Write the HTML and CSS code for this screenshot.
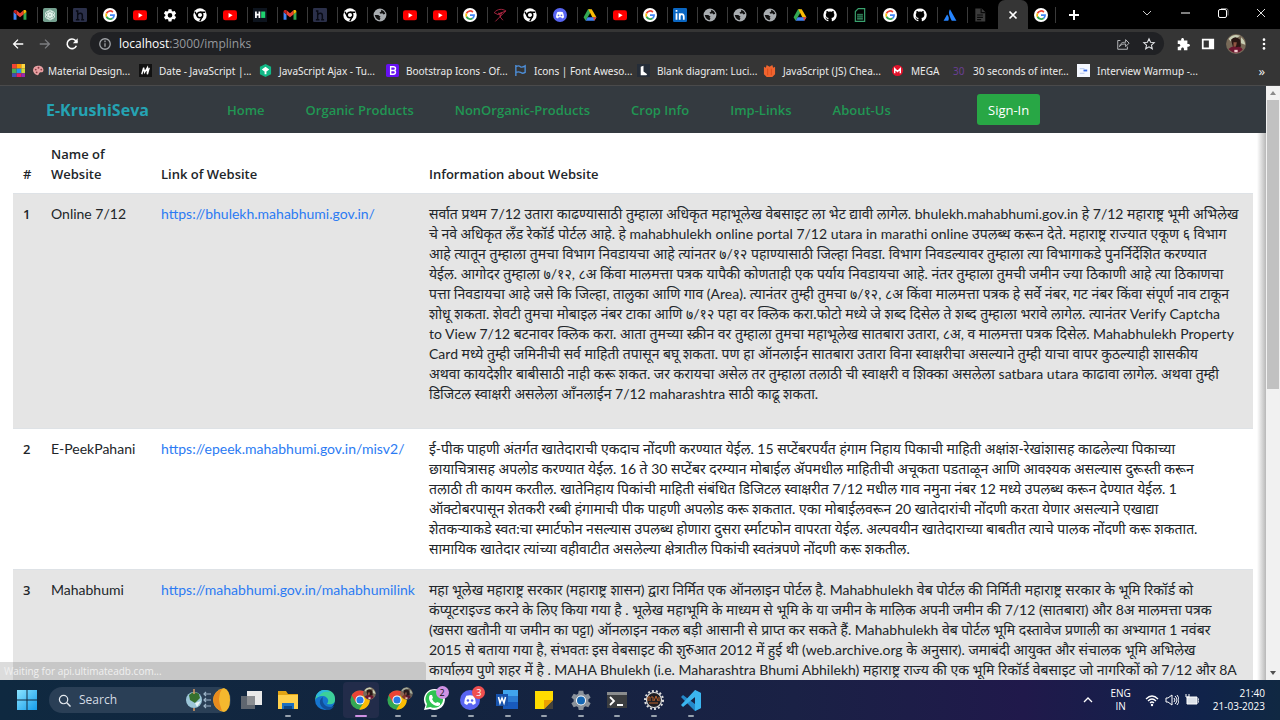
FILE: index.html
```html
<!DOCTYPE html>
<html lang="mr">
<head>
<meta charset="utf-8">
<title>Imp-Links</title>
<link rel="stylesheet" href="styles.css">
</head>
<body>
<svg class="sprite" aria-hidden="true">
  <symbol id="gmail" viewBox="0 0 24 24"><path fill="#4285f4" d="M1 20V7l5 4v9H2z"/><path fill="#34a853" d="M18 20v-9l5-4v13z"/><path fill="#ea4335" d="M6 11V4l6 5 6-5v7l-6 5z"/><path fill="#c5221f" d="M1 7c0-4 3-4 5-3v7z"/><path fill="#fbbc04" d="M23 7c0-4-3-4-5-3v7z"/></symbol>
  <symbol id="gpt" viewBox="0 0 24 24"><rect width="24" height="24" rx="3" fill="#74a08f"/><g fill="none" stroke="#e4f2ec" stroke-width="1.500"><ellipse cx="12" cy="9" rx="4" ry="5.500"/><ellipse cx="12" cy="9" rx="4" ry="5.500" transform="rotate(60 12 12)"/><ellipse cx="12" cy="9" rx="4" ry="5.500" transform="rotate(120 12 12)"/><ellipse cx="12" cy="9" rx="4" ry="5.500" transform="rotate(180 12 12)"/><ellipse cx="12" cy="9" rx="4" ry="5.500" transform="rotate(240 12 12)"/><ellipse cx="12" cy="9" rx="4" ry="5.500" transform="rotate(300 12 12)"/></g></symbol>
  <symbol id="hh" viewBox="0 0 24 24"><rect width="24" height="24" rx="2" fill="#2b304a"/><path fill="none" stroke="#080a14" stroke-width="2.500" d="M8 4v16M8 12c2-4 8-4 8 1v7M5 5h3M5 20h6M14 20h5"/></symbol>
  <symbol id="goog" viewBox="0 0 24 24"><circle cx="12" cy="12" r="12" fill="#fff"/><g fill="none" stroke-width="3"><path stroke="#ea4335" d="M6 9a7 7 0 0 1 11-2"/><path stroke="#fbbc04" d="M6 9a7 7 0 0 0 0 6"/><path stroke="#34a853" d="M6 15a7 7 0 0 0 10.500 2.500"/><path stroke="#4285f4" d="M12 12h7a7 7 0 0 1-2.500 5.500"/></g></symbol>
  <symbol id="yt" viewBox="0 0 24 24"><rect y="4" width="24" height="17" rx="4" fill="#f00"/><path fill="#fff" d="M9.500 8.500v8l7-4z"/></symbol>
  <symbol id="gear" viewBox="0 0 24 24"><path fill="currentColor" fill-rule="evenodd" d="M9.500 2h5l.6 3.200 1.800 1 3.100-1.100 2.500 4.300-2.500 2.100v2l2.500 2.100-2.500 4.300-3.100-1.100-1.800 1-.6 3.200h-5l-.6-3.200-1.800-1L4 19.900l-2.500-4.300L4 13.500v-2L1.500 9.400 4 5.100l3.100 1.100 1.800-1zM12 8.500a4 4 0 1 0 0 8 4 4 0 0 0 0-8z"/></symbol>
  <symbol id="chromebw" viewBox="0 0 24 24"><circle cx="12" cy="12" r="11.500" fill="#fff"/><circle cx="12" cy="12" r="4.800" fill="none" stroke="#000" stroke-width="2.500"/><path fill="none" stroke="#000" stroke-width="2.500" d="M12 7.200h9M16.200 14.500l-4.500 8M7.800 14.500l-4.500-8"/></symbol>
  <symbol id="hr" viewBox="0 0 24 24"><rect width="24" height="24" fill="#0d141e"/><path fill="none" stroke="#fff" stroke-width="3" d="M5 6v11M11 6v11M5 11.500h6"/><path fill="#1ed36f" d="M14 6h7v11h-7z"/></symbol>
  <symbol id="globe" viewBox="0 0 24 24"><circle cx="12" cy="12" r="11" fill="#a9adb1"/><path fill="#111" d="M14 3c4 1 6 4 7 7l-3 1-2-2-3 1-2-2 3-2zM3 12l6 0 4 3-2 2 2 1-2 3C7 20 4 17 3 12z"/></symbol>
  <symbol id="kite" viewBox="0 0 24 24"><path fill="none" stroke="#b32845" stroke-width="1.500" d="M2 8C8 1 16 1 22 5L8 11zM22 5 4 23M8 11l7-3-3 7 5 6M10 8l3 7"/></symbol>
  <symbol id="discord" viewBox="0 0 24 24"><circle cx="12" cy="12" r="12" fill="#5865f2"/><path fill="#fff" d="M7.500 7q4.500-1.500 9 0 2.500 4 2.500 9-1.500 1.500-3.500 2l-1.500-2h-4l-1.500 2q-2-.5-3.500-2 0-5 2.500-9z"/><g fill="#5865f2"><circle cx="9.500" cy="12.500" r="1.500"/><circle cx="14.500" cy="12.500" r="1.500"/></g></symbol>
  <symbol id="drive" viewBox="0 0 24 24"><path fill="#34a853" d="M8.500 2h3.500l2 3.500L4.500 22 1 16z"/><path fill="#fbbc04" d="M9 2h6l8 14h-7z"/><path fill="#4285f4" d="M8 16h15l-3.500 6h-15z"/><path fill="#ea4335" d="M17 16h6l-3.500 6z"/></symbol>
  <symbol id="li" viewBox="0 0 24 24"><rect width="24" height="24" rx="2" fill="#0a66c2"/><path fill="none" stroke="#fff" stroke-width="3" d="M6 9v11M11.500 9v11M11.500 15c0-6 7-6 7 0v5M4.500 5h3"/></symbol>
  <symbol id="github" viewBox="0 0 24 24"><path fill="#fff" d="M12 .8A11.300 11.300 0 0 0 8.400 22.800c.6.1.8-.2.8-.6v-2c-3.100.7-3.800-1.400-3.800-1.400-.5-1.300-1.200-1.700-1.200-1.700-1-.7.1-.7.1-.7 1.100.1 1.700 1.200 1.700 1.200 1 1.700 2.700 1.200 3.300.9.1-.7.4-1.200.7-1.500-2.500-.3-5.200-1.300-5.200-5.600 0-1.200.4-2.200 1.200-3-.1-.3-.5-1.500.1-3.100 0 0 1-.3 3.200 1.200a11 11 0 0 1 5.700 0c2.200-1.500 3.200-1.200 3.200-1.200.6 1.600.2 2.800.1 3.100.8.8 1.200 1.800 1.200 3 0 4.300-2.700 5.300-5.200 5.600.4.400.8 1.100.8 2.100v3.100c0 .4.200.7.800.6A11.300 11.300 0 0 0 12 .8z"/></symbol>
  <symbol id="sheet" viewBox="0 0 24 24"><path fill="none" stroke="#3aa36f" stroke-width="2" d="M9 1h11v22H4V6z"/><path fill="#2d7953" d="M7 10h10v10H7z"/><path stroke="#0b2518" d="M7 13h10M7 16h10"/></symbol>
  <symbol id="atl" viewBox="0 0 24 24"><path fill="#2684ff" d="M12 2c-3 5-2 9 3 20h8zM7 11 1 22h8c2-4 1-8-2-11z"/></symbol>
  <symbol id="file" viewBox="0 0 24 24"><path fill="#3c3c3c" d="M4 1h11l6 6v16H4z"/><path stroke="#090909" stroke-width="2" fill="none" d="M14 1v7h7M7 12h10M7 16h10M7 20h7"/></symbol>
  <symbol id="chrome" viewBox="0 0 24 24"><circle cx="12" cy="12" r="11.500" fill="#34a853"/><path fill="#ea4335" d="M2 6.300a11.500 11.500 0 0 1 20 0L22.500 7H12L7 15z"/><path fill="#fbbc04" d="M22.500 7A11.500 11.500 0 0 1 11 23.500L16.500 15 15 7z"/><circle cx="12" cy="12" r="5.500" fill="#fff"/><circle cx="12" cy="12" r="4.300" fill="#2878e8"/></symbol>
  <symbol id="face" viewBox="0 0 24 24"><circle cx="12" cy="12" r="12" fill="#786a58"/><path fill="#c9cfb5" d="M3 6q5-7 14-4L6 9zM18 4q5 4 5 9l-5-2z"/><path fill="#2a1714" d="M6 7q5-6 11 0l1 8-9 3z"/><path fill="#8f5541" d="M9 10h4l-1 5-3 1z"/><path fill="#6d1730" d="M3 18q5-5 9-2 6-2 8 3-8 8-17-1z"/><path fill="#f2cdd0" d="M10 19h4v3h-4z"/></symbol>
</svg>

<header class="browser">
  <div class="tabs">
    <button class="tab" aria-label="Gmail"><svg><use href="#gmail"/></svg></button>
    <button class="tab" aria-label="ChatGPT"><svg><use href="#gpt"/></svg></button>
    <button class="tab" aria-label="Hashnode"><svg><use href="#hh"/></svg></button>
    <button class="tab" aria-label="Google"><svg><use href="#goog"/></svg></button>
    <button class="tab" aria-label="YouTube"><svg><use href="#yt"/></svg></button>
    <button class="tab" aria-label="Settings"><svg><use href="#gear"/></svg></button>
    <button class="tab" aria-label="Chrome"><svg><use href="#chromebw"/></svg></button>
    <button class="tab" aria-label="YouTube"><svg><use href="#yt"/></svg></button>
    <button class="tab" aria-label="HackerRank"><svg><use href="#hr"/></svg></button>
    <button class="tab" aria-label="Gmail"><svg><use href="#gmail"/></svg></button>
    <button class="tab" aria-label="Hashnode"><svg><use href="#hh"/></svg></button>
    <button class="tab" aria-label="Chrome"><svg><use href="#chromebw"/></svg></button>
    <button class="tab" aria-label="Website"><svg><use href="#globe"/></svg></button>
    <button class="tab" aria-label="YouTube"><svg><use href="#yt"/></svg></button>
    <button class="tab" aria-label="YouTube"><svg><use href="#yt"/></svg></button>
    <button class="tab" aria-label="Google"><svg><use href="#goog"/></svg></button>
    <button class="tab" aria-label="Kite"><svg><use href="#kite"/></svg></button>
    <button class="tab" aria-label="Chrome"><svg><use href="#chromebw"/></svg></button>
    <button class="tab" aria-label="Discord"><svg><use href="#discord"/></svg></button>
    <button class="tab" aria-label="Drive"><svg><use href="#drive"/></svg></button>
    <button class="tab" aria-label="YouTube"><svg><use href="#yt"/></svg></button>
    <button class="tab" aria-label="Google"><svg><use href="#goog"/></svg></button>
    <button class="tab" aria-label="LinkedIn"><svg><use href="#li"/></svg></button>
    <button class="tab" aria-label="Website"><svg><use href="#globe"/></svg></button>
    <button class="tab" aria-label="Website"><svg><use href="#globe"/></svg></button>
    <button class="tab" aria-label="Website"><svg><use href="#globe"/></svg></button>
    <button class="tab" aria-label="Drive"><svg><use href="#drive"/></svg></button>
    <button class="tab" aria-label="GitHub"><svg><use href="#github"/></svg></button>
    <button class="tab" aria-label="Sheets"><svg><use href="#sheet"/></svg></button>
    <button class="tab" aria-label="Google"><svg><use href="#goog"/></svg></button>
    <button class="tab" aria-label="GitHub"><svg><use href="#github"/></svg></button>
    <button class="tab" aria-label="Atlassian"><svg><use href="#atl"/></svg></button>
    <button class="tab" aria-label="Document"><svg><use href="#file"/></svg></button>
    <button class="tab active" aria-label="Close tab"><svg viewBox="0 0 24 24"><path d="m6 6 12 12M18 6 6 18" stroke="#fff" stroke-width="3"/></svg></button>
    <button class="tab after" aria-label="Google"><svg><use href="#goog"/></svg></button>
    <button class="new-tab" aria-label="New tab"><svg viewBox="0 0 12 12"><path d="M6 1v10M1 6h10" stroke="#fff" stroke-width="2"/></svg></button>
    <div class="window-buttons">
      <button aria-label="Search tabs"><svg viewBox="0 0 12 12"><path d="m2 4 4 4 4-4" fill="none" stroke="#ccc"/></svg></button>
      <button aria-label="Minimize"><svg viewBox="0 0 12 12"><path d="M2 6h9" stroke="#fff"/></svg></button>
      <button aria-label="Restore"><svg viewBox="0 0 12 12"><path d="M4 1.500h5q2 0 2 2v5" fill="none" stroke="#777"/><rect x="1.500" y="2.500" width="8" height="8" rx="1.500" fill="none" stroke="#fff"/></svg></button>
      <button aria-label="Close window"><svg viewBox="0 0 12 12"><path d="m2 2 8 8M10 2l-8 8" stroke="#ddd"/></svg></button>
    </div>
  </div>
  <div class="toolbar">
    <button aria-label="Back"><svg viewBox="0 0 16 16"><path d="M14 8H3M8 3 3 8l5 5" fill="none" stroke="#fff" stroke-width="1.500"/></svg></button>
    <button aria-label="Forward"><svg viewBox="0 0 16 16"><path d="M2 8h11M8 3l5 5-5 5" fill="none" stroke="#7c7d80" stroke-width="1.500"/></svg></button>
    <button aria-label="Reload"><svg viewBox="0 0 16 16"><path d="M13 10a5.500 5.500 0 1 1-1-6l2 2" fill="none" stroke="#fff" stroke-width="1.800"/><path d="M14.500 1.500V7H9z" fill="#fff"/></svg></button>
    <div class="address">
      <svg viewBox="0 0 16 16"><g fill="none" stroke="#a1a4a8" stroke-width="1.500"><circle cx="8" cy="8" r="6"/><path d="M8 7v4M8 4v2"/></g></svg>
      <a class="url" href="#"><b>localhost</b>:3000/implinks</a>
      <button aria-label="Share"><svg viewBox="0 0 16 16"><path d="M5 4H2v10h11v-3M4 11c1-4 3-5 7-5V3l4 4-4 4V8c-3 0-5 0-7 3z" fill="none" stroke="#c8cacd"/></svg></button>
      <button aria-label="Bookmark"><svg viewBox="0 0 16 16"><path d="m8 2 1.800 4 4.200.4-3.200 2.900 1 4.200L8 11.300l-3.800 2.200 1-4.200L2 6.400 6.200 6z" fill="none" stroke="#e0e2e5" stroke-width="1.200"/></svg></button>
    </div>
    <div class="actions">
      <button aria-label="Extensions"><svg viewBox="0 0 16 16"><path fill="#fff" d="M2 4h4c-1-4 4-4 3 0h4v4c4-1 4 4 0 3v4H9c1-4-4-4-3 0H2v-4c4 1 4-4 0-3z"/></svg></button>
      <button aria-label="Side panel"><svg viewBox="0 0 16 16"><path fill="#fff" fill-rule="evenodd" d="M1 2h14v12H1zM3 4v8h6V4z"/></svg></button>
      <button class="profile" aria-label="Profile"><svg><use href="#face"/></svg></button>
      <button aria-label="Menu"><svg viewBox="0 0 16 16"><g fill="#fff"><circle cx="8" cy="3" r="1.500"/><circle cx="8" cy="8" r="1.500"/><circle cx="8" cy="13" r="1.500"/></g></svg></button>
    </div>
  </div>
  <nav class="bookmarks" aria-label="Bookmarks">
    <a href="#" aria-label="Colours"><svg viewBox="0 0 14 14"><path fill="#f44336" d="M0 0h5v5H0z"/><path fill="#ff9800" d="M5 0h5v5H5z"/><path fill="#ffd740" d="M10 0h4v5h-4z"/><path fill="#4caf50" d="M0 5h5v5H0z"/><path fill="#2196f3" d="M5 5h5v5H5z"/><path fill="#cddc39" d="M10 5h4v5h-4z"/><path fill="#3f51b5" d="M0 10h5v4H0z"/><path fill="#e91e63" d="M5 10h5v4H5z"/><path fill="#9c27b0" d="M10 10h4v4h-4z"/></svg></a>
    <a class="tight" href="#"><svg viewBox="0 0 14 14"><path fill="#e8a0a2" d="M6 2c7-1 8 7 4 7-3-1-2 3-4 3-6-1-7-9 0-10z"/><g fill="#8d3d46"><circle cx="4" cy="6" r="1"/><circle cx="7" cy="4" r="1"/><circle cx="10" cy="6" r="1"/><circle cx="5" cy="9" r="1"/></g></svg>Material Design...</a>
    <a href="#"><svg viewBox="0 0 14 14"><path fill="#111" d="M0 0h14v14H0z"/><path fill="none" stroke="#fff" stroke-width="1.500" d="m3 11 2-7 1 5 3-5v7l2-7"/></svg>Date - JavaScript |...</a>
    <a href="#"><svg viewBox="0 0 14 14"><path fill="#12b886" d="m7 0 6 3v8l-6 3-6-3V3z"/><path fill="#fff" d="m3 6 4-3 4 3-4 3zM6 8h2v3H6z"/></svg>JavaScript Ajax - Tu...</a>
    <a href="#"><svg viewBox="0 0 14 14"><rect width="14" height="14" rx="2" fill="#6610f2"/><path fill="none" stroke="#fff" stroke-width="1.500" d="M5 3h3c3 0 3 4 0 4H5zM5 7h3c3 0 3 4 0 4H5z"/></svg>Bootstrap Icons - Of...</a>
    <a href="#"><svg viewBox="0 0 14 14"><path fill="none" stroke="#4d8ed8" stroke-width="1.500" d="M2 1v12M2 3q3-2 5 0 2 1 5-1v7q-3 2-5 0-2-1-5 0"/></svg>Icons | Font Aweso...</a>
    <a href="#"><svg viewBox="0 0 14 14"><path fill="#252d38" d="M0 0h14v14H0z"/><path fill="#fff" d="m4 3 3-1v6l4 3-1 1H4z"/></svg>Blank diagram: Luci...</a>
    <a href="#"><svg viewBox="0 0 14 14"><path fill="#f0642e" d="m1 3 2 1 1-3 3 2 3-2 1 3 2-1v8l-3 3H4l-3-3z"/><path stroke="#d94a1b" d="M5 5v7M9 5v7"/></svg>JavaScript (JS) Chea...</a>
    <a href="#"><svg viewBox="0 0 14 14"><circle cx="7" cy="7" r="6" fill="#e3132c"/><path fill="none" stroke="#fff" stroke-width="1.500" d="M4 10V5l3 3 3-3v5"/></svg>MEGA</a>
    <a href="#"><span class="thirty" aria-hidden="true">30</span>30 seconds of inter...</a>
    <a href="#"><svg viewBox="0 0 14 14"><path fill="#f5f8ff" d="M0 0h14v14H0z"/><path stroke="#b2c5ef" d="M3 5h5M3 10h5"/><path stroke="#356ae6" stroke-width="2" d="M7 7h4"/></svg>Interview Warmup -...</a>
    <button aria-label="More bookmarks">»</button>
  </nav>
</header>

<div class="viewport">
  <div class="page">
    <nav class="navbar" aria-label="Site">
      <a class="brand" href="#">E-KrushiSeva</a>
      <div class="nav-links">
        <a href="#">Home</a><a href="#">Organic Products</a><a href="#">NonOrganic-Products</a><a href="#">Crop Info</a><a href="#">Imp-Links</a><a href="#">About-Us</a>
      </div>
      <button class="sign-in">Sign-In</button>
    </nav>
    <main>
      <table>
        <colgroup><col class="c-num"><col class="c-name"><col class="c-link"><col></colgroup>
        <thead><tr><th scope="col">#</th><th scope="col">Name of Website</th><th scope="col">Link of Website</th><th scope="col">Information about Website</th></tr></thead>
        <tbody>
          <tr><th scope="row">1</th><td>Online 7/12</td><td><a href="#">https://bhulekh.mahabhumi.gov.in/</a></td>
          <td class="info"><p>सर्वात प्रथम 7/12 उतारा काढण्यासाठी तुम्हाला अधिकृत महाभूलेख वेबसाइट ला भेट द्यावी लागेल. bhulekh.mahabhumi.gov.in हे 7/12 महाराष्ट्र भूमी अभिलेख<br>चे नवे अधिकृत लँड रेकॉर्ड पोर्टल आहे. हे mahabhulekh online portal 7/12 utara in marathi online उपलब्ध करून देते. महाराष्ट्र राज्यात एकूण ६ विभाग<br>आहे त्यातून तुम्हाला तुमचा विभाग निवडायचा आहे त्यांनतर ७/१२ पहाण्यासाठी जिल्हा निवडा. विभाग निवडल्यावर तुम्हाला त्या विभागाकडे पुनर्निर्देशित करण्यात<br>येईल. आगोदर तुम्हाला ७/१२, ८अ किंवा मालमत्ता पत्रक यापैकी कोणताही एक पर्याय निवडायचा आहे. नंतर तुम्हाला तुमची जमीन ज्या ठिकाणी आहे त्या ठिकाणचा<br>पत्ता निवडायचा आहे जसे कि जिल्हा, तालुका आणि गाव (Area). त्यानंतर तुम्ही तुमचा ७/१२, ८अ किंवा मालमत्ता पत्रक हे सर्वे नंबर, गट नंबर किंवा संपूर्ण नाव टाकून<br>शोधू शकता. शेवटी तुमचा मोबाइल नंबर टाका आणि ७/१२ पहा वर क्लिक करा.फोटो मध्ये जे शब्द दिसेल ते शब्द तुम्हाला भरावे लागेल. त्यानंतर Verify Captcha<br>to View 7/12 बटनावर क्लिक करा. आता तुमच्या स्क्रीन वर तुम्हाला तुमचा महाभूलेख सातबारा उतारा, ८अ, व मालमत्ता पत्रक दिसेल. Mahabhulekh Property<br>Card मध्ये तुम्ही जमिनीची सर्व माहिती तपासून बघू शकता. पण हा ऑनलाईन सातबारा उतारा विना स्वाक्षरीचा असल्याने तुम्ही याचा वापर कुठल्याही शासकीय<br>अथवा कायदेशीर बाबीसाठी नाही करू शकत. जर करायचा असेल तर तुम्हाला तलाठी ची स्वाक्षरी व शिक्का असलेला satbara utara काढावा लागेल. अथवा तुम्ही<br>डिजिटल स्वाक्षरी असलेला आँनलाईन 7/12 maharashtra साठी काढू शकता.</p></td></tr>
          <tr><th scope="row">2</th><td>E-PeekPahani</td><td><a href="#">https://epeek.mahabhumi.gov.in/misv2/</a></td>
          <td class="info">ई-पीक पाहणी अंतर्गत खातेदाराची एकदाच नोंदणी करण्यात येईल. 15 सप्टेंबरपर्यंत हंगाम निहाय पिकाची माहिती अक्षांश-रेखांशासह काढलेल्या पिकाच्या<br>छायाचित्रासह अपलोड करण्यात येईल. 16 ते 30 सप्टेंबर दरम्यान मोबाईल ॲपमधील माहितीची अचूकता पडताळून आणि आवश्यक असल्यास दुरूस्ती करून<br>तलाठी ती कायम करतील. खातेनिहाय पिकांची माहिती संबंधित डिजिटल स्वाक्षरीत 7/12 मधील गाव नमुना नंबर 12 मध्ये उपलब्ध करून देण्यात येईल. 1<br>ऑक्टोबरपासून शेतकरी रब्बी हंगामाची पीक पाहणी अपलोड करू शकतात. एका मोबाईलवरून 20 खातेदारांची नोंदणी करता येणार असल्याने एखाद्या<br>शेतकऱ्याकडे स्वत:चा स्मार्टफोन नसल्यास उपलब्ध होणारा दुसरा र्स्माटफोन वापरता येईल. अल्पवयीन खातेदाराच्या बाबतीत त्याचे पालक नोंदणी करू शकतात.<br>सामायिक खातेदार त्यांच्या वहीवाटीत असलेल्या क्षेत्रातील पिकांची स्वतंत्रपणे नोंदणी करू शकतील.</td></tr>
          <tr><th scope="row">3</th><td>Mahabhumi</td><td><a href="#">https://mahabhumi.gov.in/mahabhumilink</a></td>
          <td class="info">महा भूलेख महाराष्ट्र सरकार (महाराष्ट्र शासन) द्वारा निर्मित एक ऑनलाइन पोर्टल है. Mahabhulekh वेब पोर्टल की निर्मिती महाराष्ट्र सरकार के भूमि रिकॉर्ड को<br>कंप्यूटराइज्ड करने के लिए किया गया है . भूलेख महाभूमि के माध्यम से भूमि के या जमीन के मालिक अपनी जमीन की 7/12 (सातबारा) और 8अ मालमत्ता पत्रक<br>(खसरा खतौनी या जमीन का पट्टा) ऑनलाइन नकल बड़ी आसानी से प्राप्त कर सकते हैं. Mahabhulekh वेब पोर्टल भूमि दस्तावेज प्रणाली का अभ्यागत 1 नवंबर<br>2015 से बताया गया है, संभवतः इस वेबसाइट की शुरुआत 2012 में हुई थी (web.archive.org के अनुसार). जमाबंदी आयुक्त और संचालक भूमि अभिलेख<br>कार्यालय पुणे शहर में है . MAHA Bhulekh (i.e. Maharashtra Bhumi Abhilekh) महाराष्ट्र राज्य की एक भूमि रिकॉर्ड वेबसाइट जो नागरिकों को 7/12 और 8A</td></tr>
        </tbody>
      </table>
    </main>
    <div class="status">Waiting for api.ultimateadb.com...</div>
  </div>
  <div class="scrollbar" aria-hidden="true"><span class="arrow up"></span><span class="track"><span class="thumb"></span></span><span class="arrow down"></span></div>
</div>

<footer class="taskbar">
  <button class="start" aria-label="Start"><svg viewBox="0 0 20 20"><defs><linearGradient id="wg" x2="1" y2="1"><stop stop-color="#8be4ff"/><stop offset="1" stop-color="#149bea"/></linearGradient></defs><path fill="url(#wg)" d="M0 0h9.500v9.500H0zM10.500 0H20v9.500h-9.500zM0 10.500h9.500V20H0zM10.500 10.500H20V20h-9.500z"/></svg></button>
  <button class="search"><svg class="lens" viewBox="0 0 14 14"><circle cx="6" cy="6" r="4.500" fill="none" stroke="#e4e9ef" stroke-width="1.300"/><path d="m9.500 9.500 4 4" stroke="#e4e9ef" stroke-width="1.500"/></svg><span>Search</span>
    <svg class="equinox" viewBox="0 0 44 24"><circle cx="8" cy="12" r="8" fill="#9cc6d8"/><path fill="#36702e" d="M3 7q5-5 10-1l1 4-5 5-5-3z"/><path fill="#e8f4f6" d="M9 15l6-2-4 6z"/><path stroke="#d89a64" stroke-width="1.500" d="M8 1v5M8 20v3"/><path fill="none" stroke="#9db4c7" stroke-width="1.200" d="M25 6h-7m2-2-2 2 2 2M25 12h-7m2-2-2 2 2 2M25 18h-7m2-2-2 2 2 2"/><path fill="#f5b82e" d="M38 0q6 2 6 12t-6 12q-10-2-11-12Q28 2 38 0z"/><path fill="#e88b1e" d="M36 1q-6 8 0 22-8-2-9-11 1-9 9-11z"/></svg></button>
  <div class="apps">
    <button aria-label="Task view"><svg viewBox="0 0 24 24"><path fill="#e9e9e9" d="M8 3h15v14H8z"/><path fill="#73777c" fill-opacity=".8" d="M2 8h14v13H2z"/></svg></button>
    <button class="open" aria-label="File Explorer"><svg viewBox="0 0 24 24"><path fill="#e2a414" d="M2 3h8l2 3h10v14H2z"/><path fill="#ffd04c" d="M2 7h20v14H2z"/><path fill="#1d6fc0" d="M6 15h12v6H6z"/><path fill="#0c4584" d="M8 18h8v3H8z"/></svg></button>
    <button aria-label="Edge"><svg viewBox="0 0 24 24"><circle cx="12" cy="12" r="10" fill="#1675cf"/><path fill="#3ccf9a" d="M3 8C7-1 23 0 22 12c0 4-4 5-8 4 3-4 0-8-5-8-3 0-5 1-7 4z"/><path fill="#2db6df" d="M3 8c3-7 10-7 14-4-7-1-9 1-11 5z"/><path fill="#114f9b" d="M10 9c-6 3-3 12 5 13 3 0 5-2 6-4-7 3-13-2-11-9z"/></svg></button>
    <button class="open current" aria-label="Chrome"><svg viewBox="0 0 24 24"><use href="#chrome" x="1" y="2" width="20" height="20"/></svg><svg class="mini"><use href="#face"/></svg></button>
    <button class="open" aria-label="Chrome"><svg viewBox="0 0 24 24"><use href="#chrome" x="1" y="2" width="20" height="20"/></svg><svg class="mini pale"><use href="#face"/></svg></button>
    <button class="open" aria-label="WhatsApp"><svg viewBox="0 0 24 24"><path fill="#fff" d="M2 22 3.500 17A10.500 10.500 0 1 1 8 21z"/><path fill="#2fc351" d="m4 20 1-4a8.800 8.800 0 1 1 3.500 3z"/><path fill="#fff" d="M8 7h2l1 3-1 1q1 3 4 4l1-1 3 1v2q-2 2-6 0-5-3-5-7 0-2 1-3z"/></svg><span class="badge violet">2</span></button>
    <button class="open" aria-label="Discord"><svg viewBox="0 0 24 24"><use href="#discord" x="1" y="2" width="20" height="20"/></svg><span class="badge red">3</span></button>
    <button class="open" aria-label="Word"><svg viewBox="0 0 24 24"><path fill="#41a5ee" d="M7 2h15v7H7z"/><path fill="#2b7cd3" d="M7 8h15v7H7z"/><path fill="#185abd" d="M7 14h15v7H7z"/><path fill="#1753ad" d="M0 6h12v12H0z"/><path fill="none" stroke="#fff" stroke-width="1.500" d="m2.500 9 1.500 6 2-5 2 5 1.500-6"/></svg></button>
    <button class="open" aria-label="Sticky Notes"><svg viewBox="0 0 24 24"><path fill="#ffdc00" d="M3 3h18v18H3z"/><path fill="#44413b" d="M21 12v9h-9z"/><path fill="#eca000" d="M12 12h9l-9 9z"/></svg></button>
    <button class="open settings" aria-label="Settings"><svg viewBox="0 0 24 24"><use href="#gear" x="1" y="1" width="22" height="22"/><circle cx="12" cy="12.500" r="5" fill="#fff"/><circle cx="12" cy="12.500" r="4" fill="#1567b4"/></svg></button>
    <button class="open" aria-label="Terminal"><svg viewBox="0 0 24 24"><path fill="#3b3d40" d="M2 4h20v16H2z"/><path fill="#8a8c8e" d="M2 4h20v3H2z"/><path fill="none" stroke="#fff" stroke-width="1.800" d="m5 9 4 4-4 4M12 17h6"/></svg></button>
    <button class="open" aria-label="Server manager"><svg viewBox="0 0 24 24"><circle cx="12" cy="12" r="7.500" fill="#1d1d23" stroke="#dededd" stroke-width="1.200"/><circle cx="12" cy="12" r="9" fill="none" stroke="#dededd" stroke-width="2" stroke-dasharray="2 2"/><path fill="none" stroke="#ba622c" d="M6 13V9h2v4M9 9h2v4M12 13l2-5 2 5M17 9v4M7 15h9"/></svg></button>
    <button class="open" aria-label="VS Code"><svg viewBox="0 0 24 24"><path fill="#2489ca" d="m16 2 6 3v15l-6 3L2 9l2-2 12 9z"/><path fill="#3bb5ef" d="m16 2 6 3v15l-6 3zM2 17l2 2L16 9V2z"/></svg></button>
  </div>
  <div class="tray">
    <button aria-label="Hidden icons"><svg viewBox="0 0 12 12"><path d="m2 8 4-4 4 4" fill="none" stroke="#fff" stroke-width="1.300"/></svg></button>
    <button class="language">ENG<br>IN</button>
    <button class="system" aria-label="Network, volume and battery">
      <svg viewBox="0 0 14 14"><g fill="none" stroke="#fff" stroke-width="1.300"><path d="M1 6q6-6 12 0M3 8q4-4 8 0M5 10q2-2 4 0"/></g><circle cx="7" cy="12" r="1.200" fill="#fff"/></svg>
      <svg viewBox="0 0 14 14"><path d="M1 5h2l4-3v10L3 9H1zM9 5q2 2 0 4M10 3q4 4 0 8M12 2q4 5 0 10" fill="none" stroke="#fff"/></svg>
      <svg viewBox="0 0 14 14"><path d="M2 4h10v7H2z" fill="#dce2ea" stroke="#fff"/><path d="M13 6h1v3h-1M1 1v3h3V1" stroke="#fff" fill="none"/></svg>
    </button>
    <button class="clock">21:40<br>21-03-2023</button>
  </div>
</footer>
</body>
</html>
```
FILE: styles.css
```css
* { box-sizing: border-box; }
html, body { height: 100%; }
body {
  margin: 0;
  display: flex;
  flex-direction: column;
  overflow: hidden;
  font-family: "Open Sans", "Noto Sans", "Noto Sans Devanagari", sans-serif;
  font-size: 13px;
  line-height: 20px;
  color: #212529;
}
button { border: 0; padding: 0; background: none; color: inherit; font: inherit; }
a { text-decoration: none; }
svg { display: block; flex: none; }
.sprite { position: absolute; width: 0; height: 0; }

.browser { background: #353535; color: #e8e8e8; border-bottom: 1px solid #4a4a4b; }
.tabs { display: flex; align-items: stretch; height: 29px; padding-left: 5px; background: #000; }
.tab { display: flex; align-items: center; justify-content: center; width: 30px; color: #fff; background: linear-gradient(#3a3a3a, #3a3a3a) 2px 7px / 1px 16px no-repeat; }
.tab:first-child, .tab.after { background: none; }
.tab svg { width: 14px; height: 14px; }
.tab.active { margin-left: 3px; background: #353535; border-radius: 7px 7px 0 0; }
.tab.after { width: 25px; }
.new-tab { width: 42px; display: grid; place-items: center; background: linear-gradient(#3a3a3a, #3a3a3a) 2px 7px / 1px 16px no-repeat; }
.new-tab svg, .window-buttons svg { width: 12px; height: 12px; }
.window-buttons { display: flex; margin-left: auto; }
.window-buttons button { width: 38px; display: grid; place-items: center; padding-bottom: 3px; }

.toolbar { display: flex; align-items: center; height: 29px; padding: 0 13px 0 4px; }
.toolbar > button { width: 27px; display: grid; place-items: center; }
.toolbar svg { width: 14px; height: 14px; }
.address { flex: 1; display: flex; align-items: center; gap: 7px; height: 23px; margin-left: 5px; padding: 0 8px; border-radius: 12px; background: #202124; }
.address button + button { margin-left: 5px; }
.url { flex: 1; font-size: 12px; color: #96999d; }
.url b { font-weight: 400; color: #fff; }
.actions { display: flex; align-items: center; gap: 11px; margin-left: 12px; }
.actions .profile svg { width: 20px; height: 20px; }
.actions button:last-child { width: 10px; display: grid; place-items: center; }

.bookmarks {
  display: grid;
  grid-template-columns: 20px 107px 120px 127px 128px 123px 126px 128px 62px 124px 1fr auto;
  align-items: center;
  height: 27px;
  padding: 0 15px 2px 12px;
  font-family: "Noto Sans", sans-serif;
  font-size: 10px;
}
.bookmarks a { display: flex; align-items: center; gap: 7px; color: #ececec; white-space: nowrap; }
.bookmarks a.tight { gap: 3px; }
.bookmarks svg { width: 13px; height: 13px; }
.thirty { width: 13px; color: #6a3f94; }
.bookmarks button { font-size: 13px; }

.viewport { flex: 1; min-height: 0; display: flex; }
.page { position: relative; flex: 1; min-width: 0; overflow: hidden; background: #fff; }
.page::after { content: ""; position: absolute; inset: 47px 0 0 auto; width: 9px; background: linear-gradient(90deg, transparent, #b8b8b8); }
.navbar { display: flex; align-items: center; height: 47px; padding-left: 46px; background: #343a40; font-weight: 600; }
.brand { width: 181px; font-size: 16px; font-weight: 700; color: #25a3b3; }
.nav-links { display: flex; gap: 41px; width: 750px; white-space: nowrap; }
.nav-links a { color: #219653; }
.sign-in { height: 31px; padding: 0 11px; border-radius: 3px; background: #28a745; color: #fff; font-weight: 400; }

main { padding: 0 13px; }
table { width: 100%; table-layout: fixed; border-collapse: collapse; }
.c-num { width: 28px; }
.c-name { width: 110px; }
.c-link { width: 268px; }
th, td { padding: 10px; text-align: left; vertical-align: top; border-top: 1px solid #dee2e6; }
thead th { padding: 11px 10px 9px; vertical-align: bottom; border-top: 0; }
th { font-weight: 600; }
td { font-family: Lato, "Noto Sans", "Noto Sans Devanagari", sans-serif; font-size: 14px; white-space: nowrap; }
td a { color: #2b7bf3; }
tbody tr:nth-child(odd) { background: #e5e5e5; }
.info p { margin: 0 0 14px; }

.status { position: absolute; left: 0; bottom: 0; z-index: 1; width: 426px; height: 18px; padding-left: 4px; border-radius: 0 3px 0 0; background: linear-gradient(90deg, #dcdcdc 13px, #c7c7c7 13px); color: #f0f0f0; font-size: 10px; line-height: 18px; }

.scrollbar { width: 14px; display: flex; flex-direction: column; align-items: center; background: #f1f1f1; }
.track { flex: 1; width: 100%; padding: 0 1px; }
.thumb { display: block; height: 51%; background: #c1c1c1; }
.arrow { height: 14px; display: grid; place-items: center; }
.arrow::before { content: ""; border: 3px solid transparent; }
.arrow.up::before { border-top: 0; border-bottom: 4px solid #8a8a8a; }
.arrow.down::before { border-bottom: 0; border-top: 4px solid #505050; }

.taskbar { display: flex; align-items: center; height: 40px; padding: 0 16px; background: linear-gradient(90deg, #0f2940, #13243f 35%, #1a2145 62%, #20194b 80%, #10234a 94%, #102842); color: #fff; }
.start svg { width: 20px; height: 20px; }
.start { margin: 0 12px 0 1px; }
.search { display: flex; align-items: center; width: 182px; height: 26px; padding: 0 1px 0 9px; border-radius: 13px; background: #2a3f56; color: #d5dce4; font-size: 12px; text-align: left; }
.search span { flex: 1; padding-left: 8px; }
.lens { width: 13px; height: 13px; }
.equinox { width: 44px; height: 24px; }
.apps { display: grid; grid-template-columns: repeat(13, 1fr); width: 476px; margin-left: 2px; }
.apps button { position: relative; display: grid; place-items: center; height: 36px; border-radius: 4px; }
.apps svg { width: 24px; height: 24px; }
.open::after { content: ""; position: absolute; left: 50%; bottom: 1px; width: 6px; height: 2px; margin-left: -3px; border-radius: 1px; background: #98a2ae; }
.apps .current { background: #222c4a; }
.current::after { width: 12px; margin-left: -6px; background: #cf92e4; }
.apps .mini { position: absolute; top: 5px; right: 3px; width: 13px; height: 13px; border-radius: 50%; }
.apps .pale { opacity: .8; }
.badge { position: absolute; top: 4px; right: 4px; width: 13px; height: 13px; border-radius: 50%; font-size: 9px; line-height: 13px; text-align: center; }
.violet { background: #cf92e4; color: #111; }
.red { background: #f04f50; }
.settings { color: #8a929b; }
.tray { display: flex; align-items: center; margin-left: auto; font-size: 10px; line-height: 13px; }
.tray > button:first-child svg { width: 12px; height: 12px; }
.language { margin: 0 14px 0 16px; }
.system { display: flex; gap: 6px; margin-right: 2px; }
.system svg { width: 14px; height: 14px; }
.clock { margin-left: 12px; margin-right: -1px; text-align: right; }
```
